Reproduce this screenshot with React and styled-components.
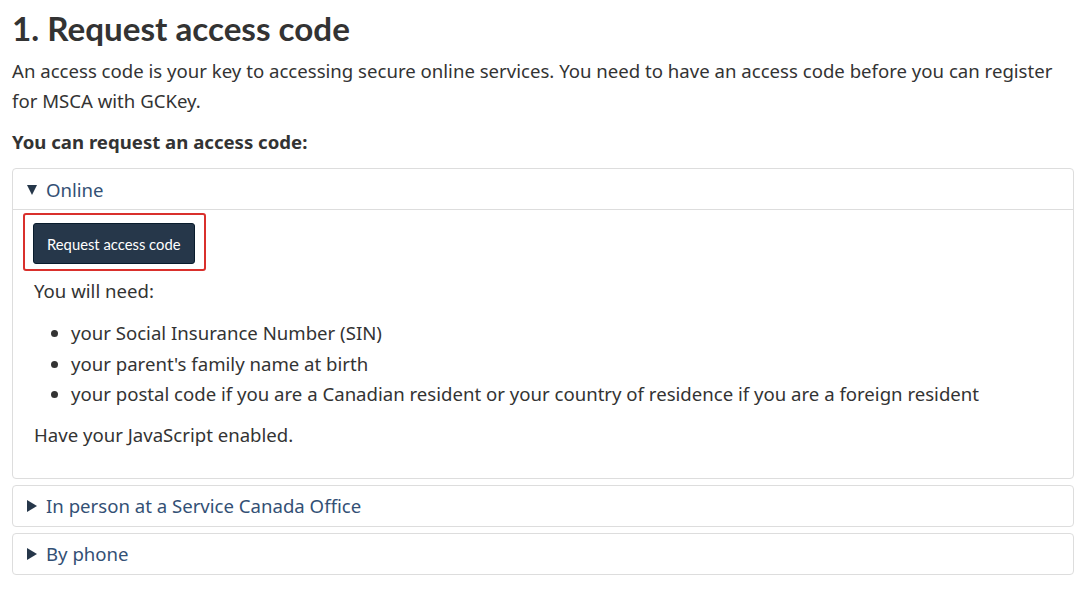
import React from "react";
import styled, { createGlobalStyle } from "styled-components";

const Global = createGlobalStyle`
  html, body { margin: 0; padding: 0; background: #fff; }
  body { font-family: "Noto Sans", sans-serif; color: #333; }
`;

const Page = styled.main`
  padding: 0 6px 0 12px;
  width: 1062px;
`;

const Title = styled.h1`
  font-family: Lato, sans-serif;
  font-weight: 700;
  font-size: 33.2px;
  line-height: 40px;
  color: #333;
  margin: 8px 0 8px;
`;

const Para = styled.p`
  font-size: 18.6px;
  line-height: 30px;
  margin: 0 0 11px;
  color: #333;
`;

const Lead = styled.p`
  font-size: 18.6px;
  line-height: 30px;
  font-weight: 700;
  margin: 0 0 11px;
  color: #333;
`;

const Panel = styled.details`
  border: 1px solid #ddd;
  border-radius: 4px;
  margin-bottom: 6px;
`;

const Summary = styled.summary`
  list-style: none;
  display: flex;
  align-items: center;
  gap: 9px;
  padding: 0 14px;
  height: 40px;
  font-size: 18.6px;
  color: #335075;
  border-bottom: ${(p) => (p.$open ? "1px solid #ddd" : "none")};
  &::-webkit-details-marker { display: none; }
`;

const Caret = styled.span`
  display: inline-block;
  width: 0;
  height: 0;
  ${(p) =>
    p.$open
      ? `border-left: 5.5px solid transparent; border-right: 5.5px solid transparent; border-top: 10px solid #26374a; margin-top: 1px;`
      : `border-top: 6px solid transparent; border-bottom: 6px solid transparent; border-left: 10px solid #26374a;`}
`;

const Body = styled.div`
  padding: 3px 20px 28px 10px;
`;

const Highlight = styled.div`
  display: inline-block;
  border: 2.5px solid #d9302c;
  border-radius: 3px;
  padding: 8px 9px 5px 8px;
`;

const Button = styled.button`
  display: block;
  font-family: Lato, sans-serif;
  font-size: 14.8px;
  color: #fff;
  background: #26374a;
  border: 1px solid #091c2d;
  border-radius: 3px;
  height: 41px;
  padding: 0 13px;
  cursor: pointer;
`;

const Text = styled.p`
  font-size: 18.6px;
  line-height: 30px;
  margin: ${(p) => p.$m || "0"};
  padding-left: 11px;
  color: #333;
`;

const List = styled.ul`
  margin: 12px 0 10px;
  padding-left: 48px;
  font-size: 18.6px;
  line-height: 30.5px;
  color: #333;
`;

const Item = styled.li`
  padding-left: 0;
`;

export default function App() {
  return (
    <>
      <Global />
      <Page>
        <Title>1. Request access code</Title>
        <Para>
          An access code is your key to accessing secure online services. You need to have an access code before you can register
          for MSCA with GCKey.
        </Para>
        <Lead>You can request an access code:</Lead>
        <Panel open>
          <Summary $open>
            <Caret $open />
            Online
          </Summary>
          <Body>
            <Highlight>
              <Button type="button">Request access code</Button>
            </Highlight>
            <Text $m="5px 0 0">You will need:</Text>
            <List>
              <Item>your Social Insurance Number (SIN)</Item>
              <Item>your parent's family name at birth</Item>
              <Item>your postal code if you are a Canadian resident or your country of residence if you are a foreign resident</Item>
            </List>
            <Text>Have your JavaScript enabled.</Text>
          </Body>
        </Panel>
        <Panel>
          <Summary>
            <Caret />
            In person at a Service Canada Office
          </Summary>
        </Panel>
        <Panel>
          <Summary>
            <Caret />
            By phone
          </Summary>
        </Panel>
      </Page>
    </>
  );
}
